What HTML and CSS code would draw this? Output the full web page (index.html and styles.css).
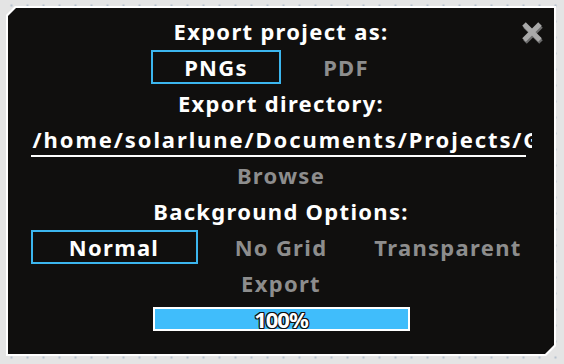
FILE: index.html
```html
<!DOCTYPE html>
<html lang="en">
<head>
  <meta charset="UTF-8" />
  <title>Export</title>
  <link rel="stylesheet" href="styles.css">
</head>
<body>
  <div class="frame">
    <div class="panel">
      <svg class="close" width="24" height="24" viewBox="0 0 24 24">
        <path d="M4 5 L20 21 M20 5 L4 21" stroke="#6c6c6c" stroke-width="5" />
        <path d="M3 3 L19 19 M19 3 L3 19" stroke="#a9a9a9" stroke-width="5" />
      </svg>

      <div class="row title">Export project as:</div>
      <div class="row pair">
        <div class="opt sel">PNGs</div>
        <div class="opt dim">PDF</div>
      </div>
      <div class="row title">Export directory:</div>
      <div class="row">
        <div class="path"><span>/home/solarlune/Documents/Projects/GoDo/MasterPlan</span></div>
      </div>
      <div class="row dim">Browse</div>
      <div class="row title">Background Options:</div>
      <div class="row triple">
        <div class="opt sel">Normal</div>
        <div class="opt dim">No Grid</div>
        <div class="opt dim">Transparent</div>
      </div>
      <div class="row dim">Export</div>
      <div class="row">
        <div class="bar">
          <div class="fill" style="width: 100%;"></div>
          <span>100%</span>
        </div>
      </div>
    </div>
  </div>
</body>
</html>
```

FILE: styles.css
```css
body {
  margin: 0;
  width: 564px;
  height: 364px;
  background-color: #e4e4e4;
  background-image: radial-gradient(circle, #b6c1ce 1px, transparent 1.6px);
  background-size: 16px 16px;
  background-position: 3.5px -2.5px;
  font-family: "Noto Sans", "Open Sans", sans-serif;
  font-weight: bold;
  font-size: 22px;
  letter-spacing: 1.3px;
  color: #fff;
  overflow: hidden;
}
.frame {
  position: relative;
  margin: 6px;
  width: 550px;
  height: 350px;
  padding: 2px;
  box-sizing: border-box;
  background: #fff;
  clip-path: polygon(9px 0, 100% 0, 100% calc(100% - 10px), calc(100% - 10px) 100%, 0 100%, 0 9px);
}
.panel {
  position: relative;
  height: 100%;
  background: #100f0e;
  display: flex;
  flex-direction: column;
  align-items: center;
  padding-top: 5px;
  box-sizing: border-box;
  clip-path: polygon(8px 0, 100% 0, 100% calc(100% - 9px), calc(100% - 9px) 100%, 0 100%, 0 8px);
}
.close {
  position: absolute;
  top: 13px;
  right: 9px;
}
.row {
  height: 36px;
  display: flex;
  align-items: center;
  justify-content: center;
  line-height: 1;
}
.dim {
  color: #8d8d8d;
}
.opt {
  height: 34px;
  display: flex;
  align-items: center;
  justify-content: center;
  box-sizing: border-box;
}
.pair .opt {
  width: 130px;
}
.triple .opt {
  width: 167px;
}
.sel {
  border: 2px solid #3cb6ee;
}
.path {
  position: relative;
  width: 501px;
  height: 36px;
  overflow: hidden;
  white-space: nowrap;
  letter-spacing: 1.9px;
  display: flex;
  align-items: center;
}
.path span {
  margin-left: 2px;
}
.path::after {
  content: "";
  position: absolute;
  left: 0;
  bottom: 0;
  width: 495px;
  height: 2px;
  background: #fff;
}
.bar {
  position: relative;
  width: 257px;
  height: 24px;
  border: 2px solid #fff;
  box-sizing: border-box;
  display: flex;
  align-items: center;
  justify-content: center;
}
.fill {
  position: absolute;
  left: 0;
  top: 0;
  bottom: 0;
  background: #40bdfb;
}
.bar span {
  position: relative;
  letter-spacing: -1px;
  text-shadow: -1px -1px 0 #111, 1px -1px 0 #111, -1px 1px 0 #111, 1px 1px 0 #111, 0 1px 0 #111, 0 -1px 0 #111, 1px 0 0 #111, -1px 0 0 #111;
}
```
